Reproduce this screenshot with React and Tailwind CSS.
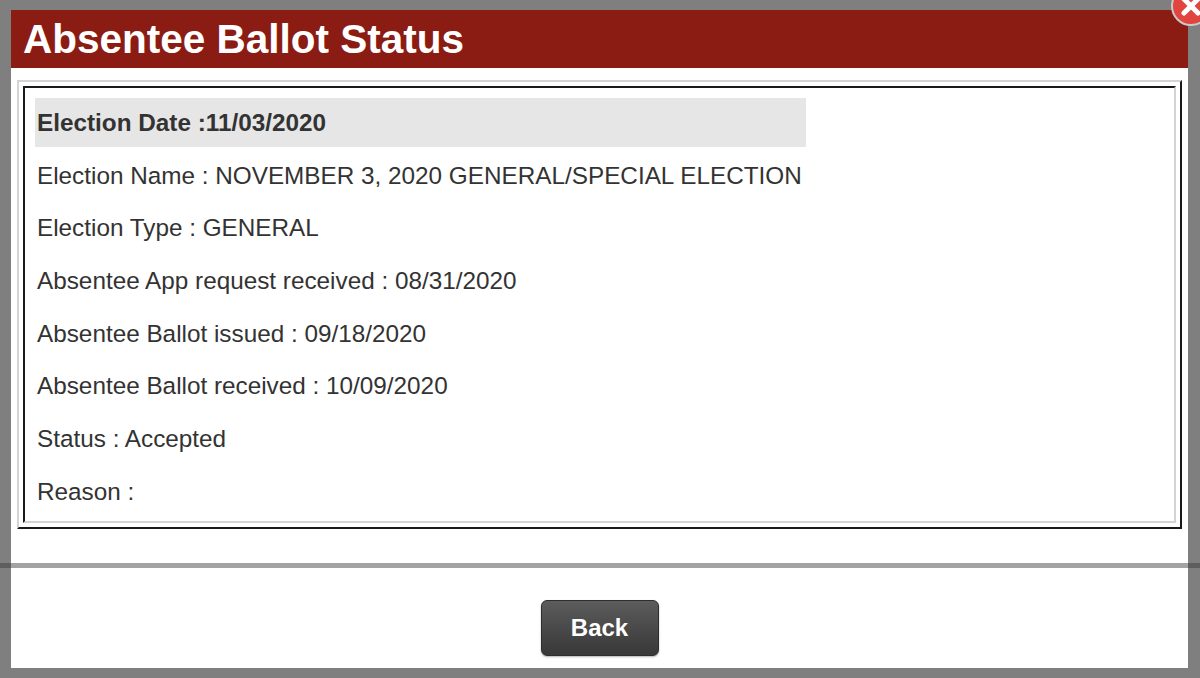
import React from "react";

const rows = [
  "Election Name : NOVEMBER 3, 2020 GENERAL/SPECIAL ELECTION",
  "Election Type : GENERAL",
  "Absentee App request received : 08/31/2020",
  "Absentee Ballot issued : 09/18/2020",
  "Absentee Ballot received : 10/09/2020",
  "Status : Accepted",
  "Reason :",
];

function CloseButton() {
  return (
    <div className="absolute -top-[14px] right-[-11px] w-[40px] h-[40px] rounded-full bg-[#e0463f] border-2 border-[#c9c9c9] flex items-center justify-center">
      <svg width="24" height="24" viewBox="0 0 24 24">
        <path d="M5 5 L19 19 M19 5 L5 19" stroke="#fff" strokeWidth="5" strokeLinecap="round" />
      </svg>
    </div>
  );
}

export default function App() {
  return (
    <div
      className="relative h-[678px] w-[1200px] overflow-hidden bg-[#7f7f7f] pt-[10px] flex flex-col"
      style={{ fontFamily: '"Liberation Sans", Arial, sans-serif' }}
    >
      <CloseButton />

      <div className="pl-[11px] pr-[12px]">
        <div className="bg-white h-[553px] flex flex-col">
          <div className="h-[58px] bg-[#8b1c13] flex items-center pl-[12px]">
            <h1 className="text-white font-bold text-[40.5px] leading-none pt-[1px]">Absentee Ballot Status</h1>
          </div>

          <div className="px-[6px] pt-[12px]">
            <div className="border-2 border-t-[#d4d4d4] border-l-[#d4d4d4] border-r-[#1a1a1a] border-b-[#1a1a1a] p-[4px]">
              <div className="border-2 border-t-[#1a1a1a] border-l-[#1a1a1a] border-r-[#d4d4d4] border-b-[#d4d4d4] h-[437px] pl-[10px] pt-[10px]">
                <div className="w-[771px] h-[49px] bg-[#e6e6e6] flex items-center pl-[2px] pt-[1px] text-[24.3px] font-bold text-[#333]">
                  Election Date :11/03/2020
                </div>
                {rows.map((r) => (
                  <div key={r} className="h-[52.7px] flex items-center pl-[2px] pt-[5px] text-[24.3px] text-[#333]">
                    {r}
                  </div>
                ))}
              </div>
            </div>
          </div>
        </div>
      </div>

      <div className="h-[5px] flex">
        <div className="w-[11px] bg-[#5e5e5e]" />
        <div className="flex-1 bg-[#a3a3a3]" />
        <div className="w-[12px] bg-[#5e5e5e]" />
      </div>

      <div className="pl-[11px] pr-[12px]">
        <div className="bg-white h-[100px] flex justify-center pt-[32px]">
          <button className="w-[118px] h-[56px] rounded-[6px] bg-gradient-to-b from-[#5c5c5c] to-[#383838] border border-[#2e2e2e] text-white font-bold text-[24px] shadow-[0_1px_2px_rgba(0,0,0,0.3)]">
            Back
          </button>
        </div>
      </div>
    </div>
  );
}
